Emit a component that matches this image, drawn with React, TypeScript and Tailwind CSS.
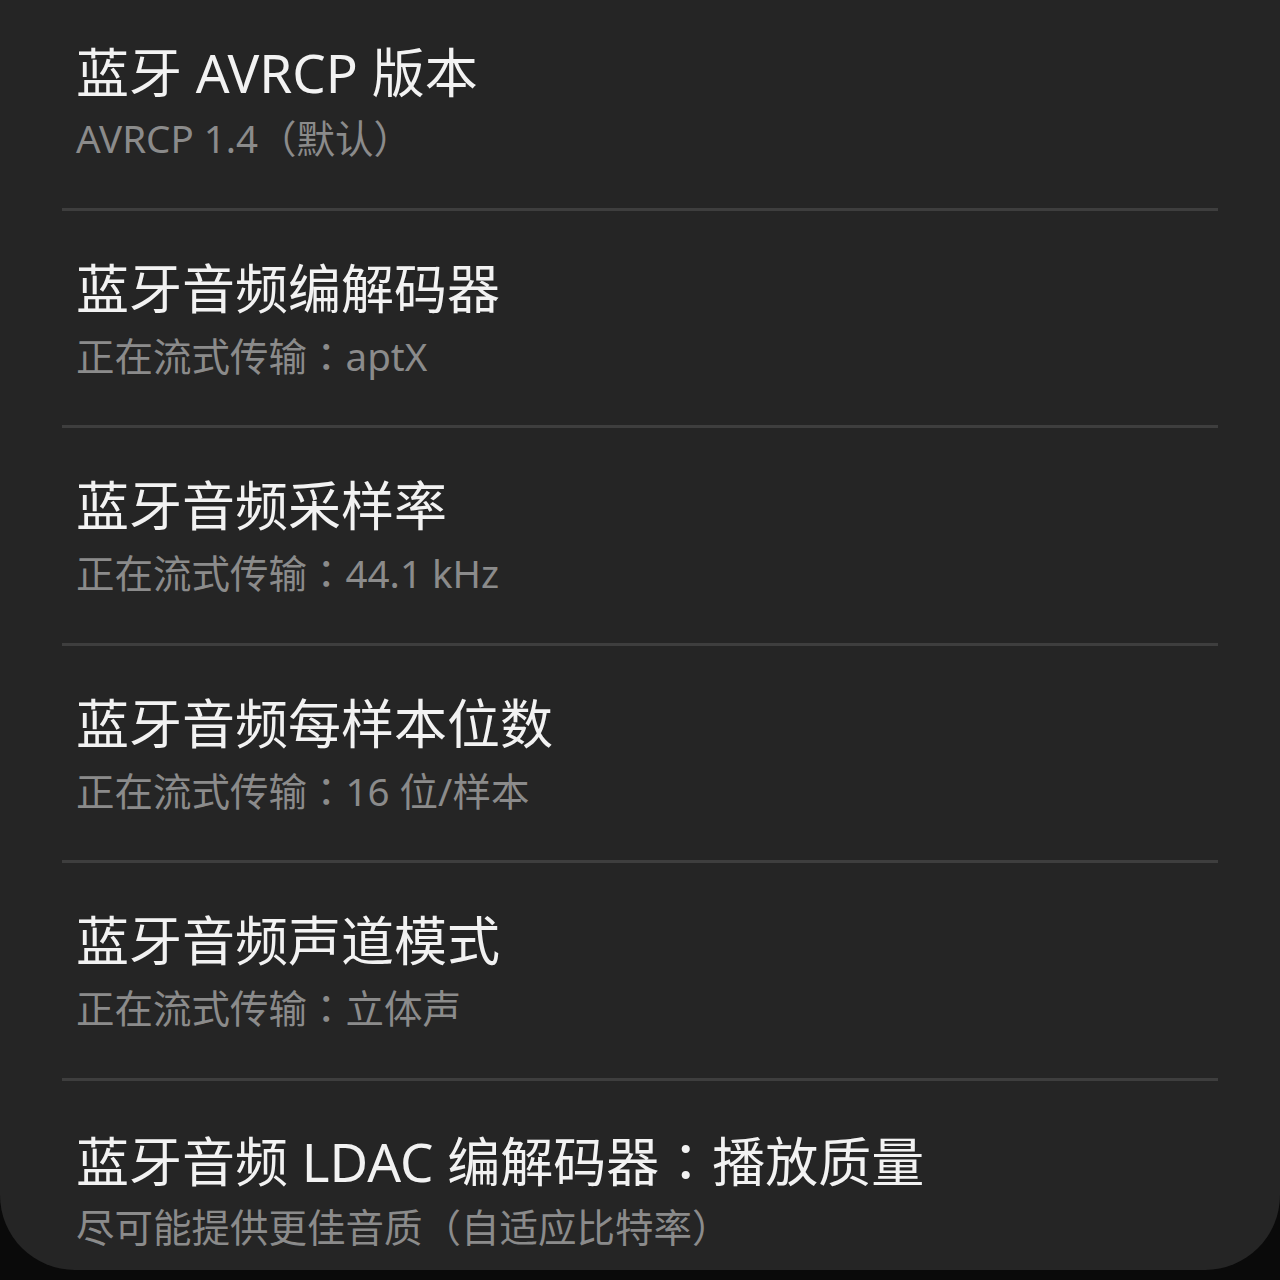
import React from 'react';

const items = [
    { title: '蓝牙 AVRCP 版本', summary: 'AVRCP 1.4（默认）' },
    { title: '蓝牙音频编解码器', summary: '正在流式传输：aptX' },
    { title: '蓝牙音频采样率', summary: '正在流式传输：44.1 kHz' },
    { title: '蓝牙音频每样本位数', summary: '正在流式传输：16 位/样本' },
    { title: '蓝牙音频声道模式', summary: '正在流式传输：立体声' },
    { title: '蓝牙音频 LDAC 编解码器：播放质量', summary: '尽可能提供更佳音质（自适应比特率）' },
];

const font = { fontFamily: '"Noto Sans", "Noto Sans CJK SC", sans-serif' };

// the full-width colon sits centred in the reference, as in the TC face
const withColon = (text: string) => {
    const parts = text.split('：');
    return parts.map((p, i) => (
        <React.Fragment key={i}>
            {i > 0 && <span style={{ fontFamily: '"Noto Sans CJK TC", sans-serif' }}>：</span>}
            {p}
        </React.Fragment>
    ));
};

const App: React.FC = () => {
    return (
        <div className="h-[1280px] w-[1280px] overflow-hidden bg-[#0a0a0a]" style={font}>
            <div className="h-[1270px] rounded-b-[75px] bg-[#252525] px-[62px]">
                {items.map((item, i) => (
                    <div key={item.title}>
                        {i > 0 && <div className="h-[3px] bg-[#3e3e3e]" />}
                        <div className={`px-[14px] ${i === 0 ? 'pt-[40px]' : 'pt-[45px]'} pb-[37.5px]`}>
                            <div className="text-[53px] leading-[66px] text-[#f2f2f2] whitespace-nowrap">{withColon(item.title)}</div>
                            <div className="text-[38.5px] leading-[64px] text-[#8b8b8b] whitespace-nowrap">{withColon(item.summary)}</div>
                        </div>
                    </div>
                ))}
            </div>
        </div>
    );
};

export default App;
